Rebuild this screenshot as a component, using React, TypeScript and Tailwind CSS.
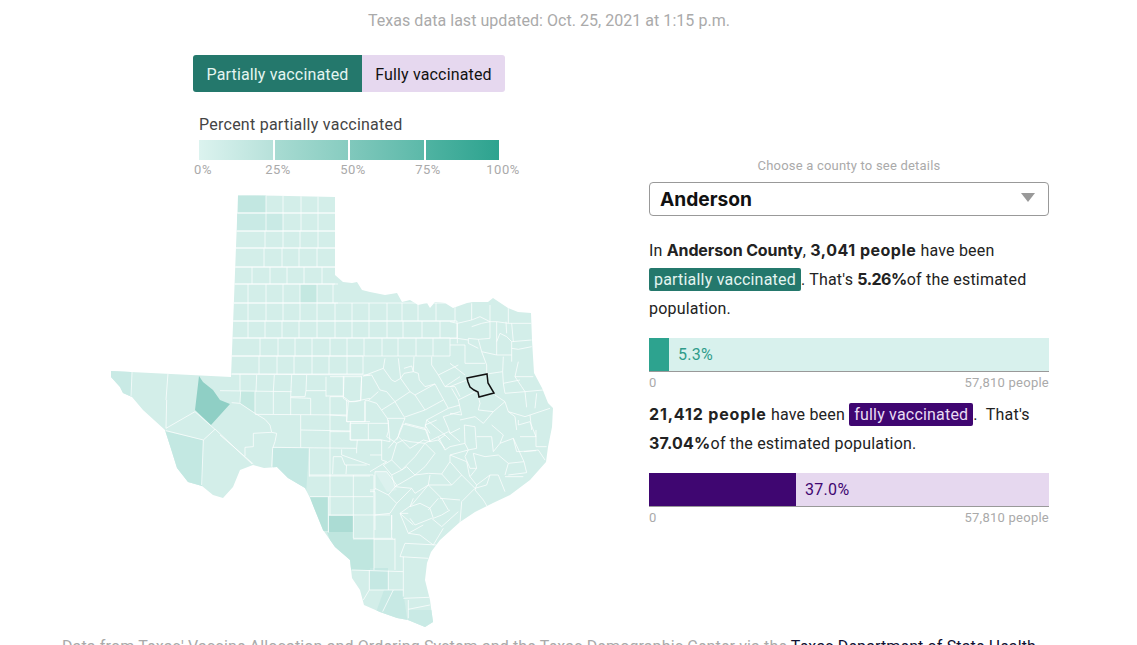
const outline =
  "238,195 335,197 335,275 343,282 352,283 357,282 362,290 370,292 385,295 397,293 402,302 410,300 418,305 427,303 430,308 435,302 445,303 453,308 467,303 473,302 488,302 493,298 508,308 518,312 531,313 532,340 534,373 542,388 548,403 553,408 552,427 548,447 546,462 530,480 510,495 493,503 475,512 460,522 440,540 431,552 427,563 425,580 430,600 433,622 425,627 408,620 397,618 380,612 364,605 360,590 352,578 350,560 335,547 323,530 310,498 305,488 288,478 277,467 264,468 253,465 240,470 233,487 223,498 213,495 202,486 188,482 177,468 172,452 165,430 143,410 132,397 123,393 120,387 111,377 111,371 231,377";

const rows: [number, number, number, number, number[]][] = [
  [195, 213, 236, 335, [266, 283, 301, 318]],
  [213, 231, 236, 335, [266, 283, 301, 318]],
  [231, 248, 236, 335, [265, 283, 300, 318]],
  [248, 267, 234, 335, [264, 282, 299, 317]],
  [267, 284, 234, 335, [252, 270, 287, 304, 322]],
  [284, 303, 232, 338, [248, 266, 283, 300, 317, 333]],
  [303, 321, 232, 455, [248, 266, 283, 300, 317, 335, 352, 369, 387, 402, 418, 436, 455]],
  [321, 338, 232, 457, [248, 265, 282, 299, 317, 335, 352, 369, 387, 403, 422, 440, 457]],
  [338, 356, 232, 450, [260, 278, 295, 312, 330, 347, 364, 382, 398, 416, 433, 450]],
  [356, 374, 232, 363, [259, 277, 294, 312, 329, 347, 363]],
];

// county borders traced from 3x crops; each group has its own origin
const crops: { x: number; y: number; lines: string[] }[] = [
  {
    x: 330,
    y: 340,
    lines: [
      "100,108 160,85 165,55",
      "160,85 185,120 195,125 212,115 205,55",
      "212,115 222,100 250,95 252,50",
      "222,85 245,78 250,95",
      "250,95 265,100 268,120 285,140 315,132",
      "305,50 305,75 325,105 385,75",
      "325,105 345,140 390,110",
      "212,115 240,155 195,185 222,230",
      "240,155 255,165 315,132 355,205",
      "255,165 285,210 222,232",
      "125,105 150,150 170,155 195,185 155,210",
      "100,108 125,105",
      "145,155 115,182 140,190 158,215 172,235 225,235",
      "95,110 92,182 60,185 40,170 42,110 95,110",
      "42,110 0,110",
      "0,170 40,170",
      "55,185 50,245 105,245 105,182 115,182",
      "0,225 50,228",
      "60,250 175,250",
      "60,250 60,300 155,300 180,305 175,250 172,235",
      "115,250 115,300",
      "0,275 60,275",
      "225,235 210,270 205,290 175,325",
      "225,250 285,265 300,305",
      "285,265 290,240 355,205 390,195",
      "290,240 345,285 325,300",
      "285,210 340,180",
      "345,140 375,140 390,170",
      "355,265 340,230 390,215",
      "355,265 360,280 390,265",
      "205,290 240,325 280,300 300,305 325,300 345,325",
      "345,285 360,300",
    ],
  },
  {
    x: 450,
    y: 300,
    lines: [
      "65,10 65,60 22,70 0,65",
      "22,70 22,130",
      "0,115 22,115 55,120",
      "0,135 45,135 45,190 105,190",
      "65,60 90,50 120,65 120,115",
      "65,80 95,70 120,65",
      "120,15 120,65",
      "175,20 175,70 140,65 120,65",
      "140,65 140,165",
      "168,65 170,100",
      "120,115 85,118 55,115 55,130 85,145",
      "85,118 95,155 140,165 185,165",
      "140,125 150,100 170,110 185,125 245,120",
      "185,125 185,185",
      "175,70 245,70",
      "185,70 190,125",
      "185,145 205,148 245,140",
      "95,155 110,195 110,222",
      "160,170 158,215 110,222",
      "158,215 160,250 210,240",
      "205,185 195,230 250,230",
      "195,230 215,260 225,275 280,270",
      "160,250 165,280 225,275 230,322",
      "260,280 255,325",
      "135,285 165,305 175,335 225,350 300,325",
      "85,290 90,310 85,330 130,335 165,305",
      "130,335 100,370 75,350 30,360",
      "175,335 195,350 200,390",
      "240,345 245,390",
      "0,260 50,240",
      "5,265 25,300 75,275",
      "25,300 35,345 0,340",
      "0,190 45,225",
    ],
  },
  {
    x: 370,
    y: 420,
    lines: [
      "55,0 55,35 50,50 80,70",
      "0,60 35,60 35,120 50,125 0,155",
      "0,105 35,105",
      "80,70 65,120 95,150 135,110 165,70",
      "65,120 40,135 65,165 95,150 110,140 135,165 175,160",
      "135,165 75,200 65,165",
      "15,155 50,155 80,195 55,225 15,205",
      "15,155 15,210 0,210",
      "55,225 80,250 125,205 135,220 175,195 215,235 235,270",
      "75,200 125,205",
      "175,160 215,162 245,195 175,195 180,165",
      "215,162 240,125 275,165 245,195",
      "135,165 165,140 195,100 165,70",
      "165,70 120,65 100,60 80,70",
      "165,70 205,50 225,90",
      "180,65 170,30 100,12 80,60",
      "180,40 165,15 200,0",
      "205,50 235,35 270,65",
      "225,90 240,80 285,70 295,90 240,105 240,125",
      "285,70 283,15 315,20 320,85 295,90",
      "240,105 290,125 298,165 300,170",
      "295,90 285,110 300,145 320,145 300,170",
      "320,145 310,100 345,110 385,105 415,130 405,165",
      "320,50 365,50 370,95 390,70 430,55",
      "430,55 462,125 415,130",
      "462,125 470,158 415,165",
      "462,95 505,90 525,120",
      "430,55 440,95 498,92",
      "498,30 498,80 530,80",
      "445,0 445,15 480,5 498,50 450,50",
      "365,15 400,45 390,70",
      "300,170 320,195 360,165 385,165 405,215",
      "320,195 315,210 340,240 355,265",
      "315,205 275,245 270,310",
      "275,165 315,205",
      "210,235 270,240",
      "360,165 350,195 315,205",
      "405,170 460,170",
      "175,195 125,255 90,280",
      "130,235 120,260 150,250 180,265 190,295 215,285 240,270",
      "205,235 175,270",
      "90,280 130,315",
      "15,285 60,280 80,250",
      "0,215 15,215 15,285",
      "65,285 65,330",
      "15,285 15,330",
      "120,295 135,315 185,295 215,320 265,275",
    ],
  },
  {
    x: 220,
    y: 370,
    lines: [
      "0,12 450,15",
      "60,12 60,62",
      "110,15 108,65",
      "163,15 160,65",
      "215,15 212,80",
      "260,15 258,62",
      "318,20 318,80",
      "370,18 370,85",
      "425,18 422,90",
      "0,62 215,65",
      "212,80 255,80 258,62 318,62",
      "318,78 370,78",
      "62,62 60,98",
      "105,65 105,130",
      "160,65 160,132",
      "212,83 272,85 272,135",
      "212,80 212,135",
      "330,80 330,135",
      "380,90 380,155",
      "435,95 435,155",
      "370,85 385,95 405,95 425,90 450,85",
      "105,133 380,135",
      "105,130 135,148 150,165 155,187 170,190 165,215 158,235 155,290",
      "35,98 60,100 105,130",
      "242,135 242,232",
      "330,135 330,235",
      "243,180 392,183",
      "392,155 392,210 450,210",
      "380,155 450,155",
      "158,232 410,235 412,210",
      "410,235 410,250",
      "0,195 100,282",
      "155,187 100,190 100,230 75,232 75,258",
      "268,235 268,320",
      "268,318 450,318",
      "330,235 330,318",
      "365,238 365,255 450,285",
      "340,260 365,260 375,285 440,285",
      "340,260 338,312",
      "378,312 380,285",
    ],
  },
  {
    x: 160,
    y: 400,
    lines: [
      "18,92 130,120 165,88 105,35 18,85",
      "20,0 18,85",
      "125,255 130,120",
      "510,225 510,345",
      "580,225 580,415",
      "447,225 640,225",
      "450,290 640,290",
      "505,290 505,398",
      "505,345 690,345",
      "695,345 695,415",
      "580,415 700,415",
      "642,225 642,510",
      "575,510 730,515",
      "705,415 705,510",
      "642,418 705,418",
      "628,510 628,570",
      "685,512 685,570",
      "628,570 730,570",
      "730,470 730,590",
      "720,470 805,475",
      "720,470 735,430 830,435",
      "730,595 808,592",
      "745,628 810,615",
      "745,600 745,655",
      "668,635 700,570",
      "610,600 628,570",
      "745,400 780,405 820,435 850,385",
      "745,340 720,340 745,400 790,375",
    ],
  },
];

function TexasMap() {
  return (
    <svg width="460" height="445" viewBox="100 190 460 445" className="block shrink-0">
      <defs>
        <clipPath id="tx">
          <polygon points={outline} />
        </clipPath>
      </defs>
      <polygon points={outline} fill="#d3eee9" />
      <g clipPath="url(#tx)">
        <polygon points="238,195 266,195 266,213 238,213" fill="#c2e7e1" />
        <polygon points="237,213 266,213 266,231 237,231" fill="#c9eae5" />
        <polygon points="266,213 283,213 283,231 266,231" fill="#c9eae5" />
        <polygon points="300,285 317,285 317,304 300,304" fill="#c4e8e1" />
        <polygon points="240,391 255,391 255,413 240,403" fill="#c4e8e1" />
        <polygon points="199,376 203,382 213,390 220,400 230,404 211,425 195,410" fill="#8fcfc5" />
        <polygon points="329,516 353,516 353,532 329,532" fill="#abdcd4" />
        <polygon points="310,497 328,497 328,531 320,531" fill="#b6e2da" />
        <polygon points="327,532 353,532 353,540 374,540 374,570 340,570" fill="#bfe6df" />
        <polygon points="160,430 203,440 202,490 170,490" fill="#c3e8e2" />
        <polygon points="273,448 309,448 306,495 273,480" fill="#c4e8e3" />
        <polygon points="370,568 388,568 388,590 370,590" fill="#c5e8e3" />
        <polygon points="384,590 403,590 408,625 375,615" fill="#c7e9e4" />
        <polygon points="100,365 132,365 132,400 100,400" fill="#c9eae5" />
        <polygon points="408,610 435,610 435,630 408,630" fill="#c9eae5" />
        <polygon points="375,472 387,472 397,490 387,492" fill="#dcf1ee" />
        <g stroke="#ffffff" strokeOpacity="0.9" strokeWidth="0.8" fill="none">
          {rows.map(([top, bottom, left, right, cuts]) => (
            <g key={top}>
              <line x1={left} y1={top} x2={right} y2={top} />
              <line x1={left} y1={bottom} x2={right} y2={bottom} />
              {cuts.map((x) => (
                <line key={x} x1={x} y1={top} x2={x} y2={bottom} />
              ))}
            </g>
          ))}
          <line x1="132" y1="372" x2="131" y2="397" />
          <line x1="168" y1="373" x2="166" y2="400" />
          <line x1="215" y1="429" x2="252" y2="464" />
          {crops.map((crop) => (
            <g key={crop.x} transform={`translate(${crop.x} ${crop.y}) scale(0.3333)`} strokeWidth="2.4">
              {crop.lines.map((p) => (
                <polyline key={p} points={p} />
              ))}
            </g>
          ))}
        </g>
      </g>
      <polygon
        points="467,378 487,374 488,383 494,393 479,397 478,392 474,390 470,387 468,382"
        fill="none"
        stroke="#111111"
        strokeWidth="1.5"
      />
    </svg>
  );
}

function Bar({ pct, label, fill, track, ink }: { pct: number; label: string; fill: string; track: string; ink: string }) {
  return (
    <div>
      <div className={`flex h-[34px] items-center border-b border-[#999999] ${track}`}>
        <div className={`h-full ${fill}`} style={{ width: `${pct}%` }} />
        <span className={`ml-[9px] text-[16px] tracking-[0.3px] ${ink}`}>{label}</span>
      </div>
      <div className="flex justify-between pt-px text-[13px] leading-[20px] tracking-[0.25px] text-[#aaaaaa]">
        <span>0</span>
        <span>57,810 people</span>
      </div>
    </div>
  );
}

export default function App() {
  return (
    <div className="h-[645px] w-[1137px] overflow-hidden bg-white font-['Roboto',sans-serif] text-[16px] text-[#222222]">
      <div className="w-[1098px]">
        <p className="pt-[9px] text-center leading-[24px] tracking-[0.04px] text-[#aaaaaa]">
          Texas data last updated: Oct. 25, 2021 at 1:15 p.m.
        </p>
        <div className="flex">
          <div className="ml-[100px] w-[549px]">
            <div className="ml-[93px] mt-[22px] flex h-[37px] w-[312px] overflow-hidden rounded-[3px] leading-[39px] tracking-[0.15px]">
              <div className="w-[169px] bg-[#24786c] text-center text-[#e4f5f1]">Partially vaccinated</div>
              <div className="flex-1 bg-[#e6d8ef] text-center text-[#111111]">Fully vaccinated</div>
            </div>
            <p className="ml-[99px] mt-[21px] leading-[24px] tracking-[0.25px] text-[#444444]">Percent partially vaccinated</p>
            <div className="ml-[99px] mt-[3px] flex h-[20px] w-[300px] gap-[2px]">
              <div className="flex-1 bg-[linear-gradient(to_right,#dcf3ef,#b7e1da)]" />
              <div className="flex-1 bg-[linear-gradient(to_right,#a8dbd2,#87ccc0)]" />
              <div className="flex-1 bg-[linear-gradient(to_right,#80c8bc,#5cb9a9)]" />
              <div className="flex-1 bg-[linear-gradient(to_right,#4fb3a2,#2da38f)]" />
            </div>
            <div className="ml-[65.5px] grid grid-cols-[repeat(5,75px)] text-center text-[13px] leading-[20px] tracking-[0.5px] text-[#aaaaaa]">
              <span>0%</span>
              <span>25%</span>
              <span>50%</span>
              <span>75%</span>
              <span>100%</span>
            </div>
            <div className="mt-[10px]">
              <TexasMap />
            </div>
          </div>
          <div className="mt-[123px] w-[400px]">
            <p className="text-center text-[13px] leading-[20px] tracking-[0.2px] text-[#aaaaaa]">Choose a county to see details</p>
            <div className="mt-[6px] flex h-[34px] items-center justify-between rounded-[4px] border border-[#999999] pl-[10px] pr-[13px]">
              <span className="font-['Inter',sans-serif] text-[19.2px] font-bold text-[#111111]">Anderson</span>
              <svg width="14" height="9" viewBox="0 0 14 9" className="mb-[3px]">
                <polygon points="0,0 14,0 7,9" fill="#999999" />
              </svg>
            </div>
            <p className="mt-[20px] leading-[29px] tracking-[0.2px]">
              In <b className="font-['Inter',sans-serif] tracking-[-0.13px]">Anderson County</b>,{" "}
              <b className="font-['Inter',sans-serif] tracking-[0.5px]">3,041 people</b> have been{" "}
              <span className="rounded-[2px] bg-[#24786c] px-[5px] py-[2px] text-[#e4f5f1]">partially vaccinated</span>. That's{" "}
              <b className="font-['Inter',sans-serif] tracking-[-0.5px]">5.26%</b>of the estimated population.
            </p>
            <div className="mt-[15px]">
              <Bar pct={5} label="5.3%" fill="bg-[#2da38f]" track="bg-[#d8f1ed]" ink="text-[#2f9c8a]" />
            </div>
            <p className="mt-[7px] leading-[29px] tracking-[0.2px]">
              <b className="font-['Inter',sans-serif] tracking-[0.85px]">21,412 people</b> have been{" "}
              <span className="rounded-[2px] bg-[#3f0671] px-[5px] py-[2px] text-[#eadcf5]">fully vaccinated</span>.&nbsp; That's{" "}
              <b className="font-['Inter',sans-serif]">37.04%</b>of the estimated population.
            </p>
            <div className="mt-[15px]">
              <Bar pct={36.75} label="37.0%" fill="bg-[#3f0671]" track="bg-[#e6d8ef]" ink="text-[#3f0671]" />
            </div>
          </div>
        </div>
        <p className="text-center leading-[24px] tracking-[0.14px] text-[#aaaaaa]">
          Data from Texas' Vaccine Allocation and Ordering System and the Texas Demographic Center via the{" "}
          <span className="text-[#111133]">Texas Department of State Health</span>
        </p>
      </div>
    </div>
  );
}
